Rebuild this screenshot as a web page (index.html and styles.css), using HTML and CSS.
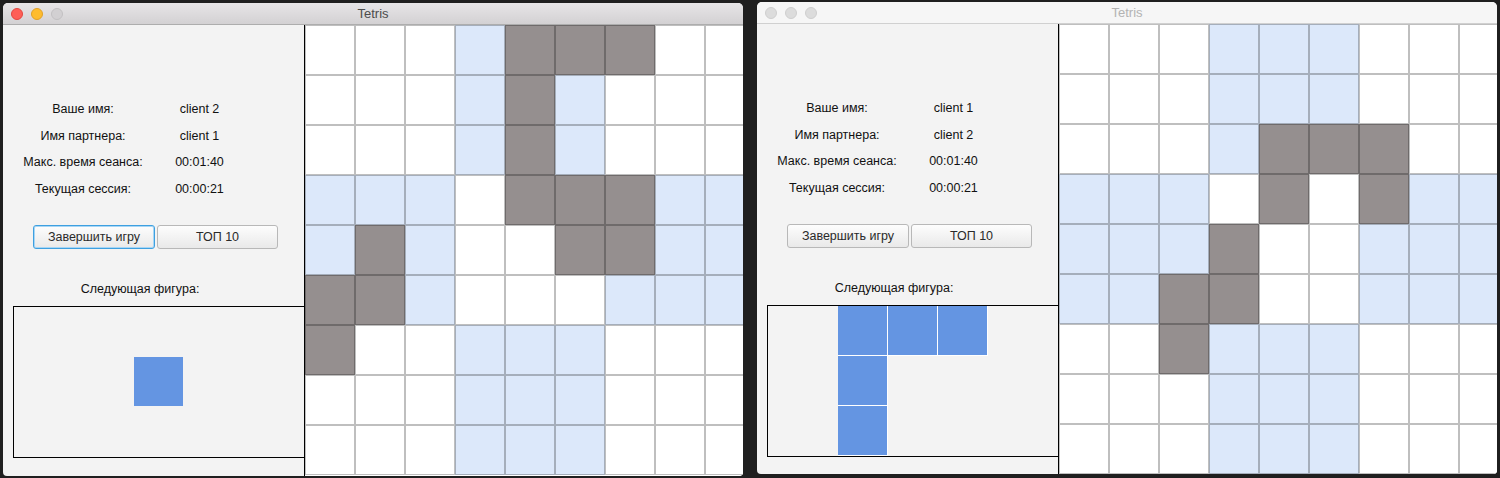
FILE: index.html
```html
<!DOCTYPE html>
<html lang="ru">
<head>
<meta charset="utf-8">
<title>Tetris</title>
<link rel="stylesheet" href="styles.css">
</head>
<body>
<div class="desktop">
  <div class="window active w1">
    <div class="titlebar">
      <div class="lights">
        <span class="light red"></span><span class="light yellow"></span><span class="light off"></span>
      </div>
      <div class="title">Tetris</div>
      <div></div>
    </div>
    <div class="content">
      <div class="panel">
        <div class="info">
          <div>Ваше имя:</div><div>client 2</div>
          <div>Имя партнера:</div><div>client 1</div>
          <div>Макс. время сеанса:</div><div>00:01:40</div>
          <div>Текущая сессия:</div><div>00:00:21</div>
        </div>
        <div class="buttons">
          <button class="btn focus">Завершить игру</button>
          <button class="btn">ТОП 10</button>
        </div>
        <div class="next-label">Следующая фигура:</div>
        <div class="preview">
          <div class="piece one">
            <div class="pc"></div>
          </div>
        </div>
      </div>
      <div class="board">
        <div class="c"></div><div class="c"></div><div class="c"></div><div class="c b"></div><div class="c g"></div><div class="c g"></div><div class="c g"></div><div class="c"></div><div class="c"></div>
        <div class="c"></div><div class="c"></div><div class="c"></div><div class="c b"></div><div class="c g"></div><div class="c b"></div><div class="c"></div><div class="c"></div><div class="c"></div>
        <div class="c"></div><div class="c"></div><div class="c"></div><div class="c b"></div><div class="c g"></div><div class="c b"></div><div class="c"></div><div class="c"></div><div class="c"></div>
        <div class="c b"></div><div class="c b"></div><div class="c b"></div><div class="c"></div><div class="c g"></div><div class="c g"></div><div class="c g"></div><div class="c b"></div><div class="c b"></div>
        <div class="c b"></div><div class="c g"></div><div class="c b"></div><div class="c"></div><div class="c"></div><div class="c g"></div><div class="c g"></div><div class="c b"></div><div class="c b"></div>
        <div class="c g"></div><div class="c g"></div><div class="c b"></div><div class="c"></div><div class="c"></div><div class="c"></div><div class="c b"></div><div class="c b"></div><div class="c b"></div>
        <div class="c g"></div><div class="c"></div><div class="c"></div><div class="c b"></div><div class="c b"></div><div class="c b"></div><div class="c"></div><div class="c"></div><div class="c"></div>
        <div class="c"></div><div class="c"></div><div class="c"></div><div class="c b"></div><div class="c b"></div><div class="c b"></div><div class="c"></div><div class="c"></div><div class="c"></div>
        <div class="c"></div><div class="c"></div><div class="c"></div><div class="c b"></div><div class="c b"></div><div class="c b"></div><div class="c"></div><div class="c"></div><div class="c"></div>
      </div>
    </div>
  </div>

  <div class="window inactive w2">
    <div class="titlebar">
      <div class="lights">
        <span class="light dim"></span><span class="light dim"></span><span class="light dim"></span>
      </div>
      <div class="title">Tetris</div>
      <div></div>
    </div>
    <div class="content">
      <div class="panel">
        <div class="info">
          <div>Ваше имя:</div><div>client 1</div>
          <div>Имя партнера:</div><div>client 2</div>
          <div>Макс. время сеанса:</div><div>00:01:40</div>
          <div>Текущая сессия:</div><div>00:00:21</div>
        </div>
        <div class="buttons">
          <button class="btn">Завершить игру</button>
          <button class="btn">ТОП 10</button>
        </div>
        <div class="next-label">Следующая фигура:</div>
        <div class="preview">
          <div class="piece ell">
            <div class="pc"></div><div class="pc"></div><div class="pc"></div>
            <div class="pc"></div><div class="empty"></div><div class="empty"></div>
            <div class="pc"></div><div class="empty"></div><div class="empty"></div>
          </div>
        </div>
      </div>
      <div class="board">
        <div class="c"></div><div class="c"></div><div class="c"></div><div class="c b"></div><div class="c b"></div><div class="c b"></div><div class="c"></div><div class="c"></div><div class="c"></div>
        <div class="c"></div><div class="c"></div><div class="c"></div><div class="c b"></div><div class="c b"></div><div class="c b"></div><div class="c"></div><div class="c"></div><div class="c"></div>
        <div class="c"></div><div class="c"></div><div class="c"></div><div class="c b"></div><div class="c g"></div><div class="c g"></div><div class="c g"></div><div class="c"></div><div class="c"></div>
        <div class="c b"></div><div class="c b"></div><div class="c b"></div><div class="c"></div><div class="c g"></div><div class="c"></div><div class="c g"></div><div class="c b"></div><div class="c b"></div>
        <div class="c b"></div><div class="c b"></div><div class="c b"></div><div class="c g"></div><div class="c"></div><div class="c"></div><div class="c b"></div><div class="c b"></div><div class="c b"></div>
        <div class="c b"></div><div class="c b"></div><div class="c g"></div><div class="c g"></div><div class="c"></div><div class="c"></div><div class="c b"></div><div class="c b"></div><div class="c b"></div>
        <div class="c"></div><div class="c"></div><div class="c g"></div><div class="c b"></div><div class="c b"></div><div class="c b"></div><div class="c"></div><div class="c"></div><div class="c"></div>
        <div class="c"></div><div class="c"></div><div class="c"></div><div class="c b"></div><div class="c b"></div><div class="c b"></div><div class="c"></div><div class="c"></div><div class="c"></div>
        <div class="c"></div><div class="c"></div><div class="c"></div><div class="c b"></div><div class="c b"></div><div class="c b"></div><div class="c"></div><div class="c"></div><div class="c"></div>
      </div>
    </div>
  </div>
</div>
</body>
</html>
```
FILE: styles.css
```css
* { box-sizing: border-box; }
html, body { margin: 0; padding: 0; }
body {
  background: #1f1f1f;
  width: 1500px;
  height: 478px;
  overflow: hidden;
  font-family: "Liberation Sans", Arial, sans-serif;
}
.desktop {
  display: flex;
  align-items: flex-start;
  gap: 14px;
  padding-left: 3px;
}
.window {
  width: 740px;
  border-radius: 5px 5px 4px 4px;
  overflow: hidden;
  background: #f3f3f3;
  display: flex;
  flex-direction: column;
}
.w1 { margin-top: 3px; height: 473px; }
.w2 { margin-top: 2px; height: 472px; }

.titlebar {
  height: 22px;
  flex: none;
  display: grid;
  grid-template-columns: 1fr auto 1fr;
  align-items: center;
  border-bottom: 1px solid #adadad;
}
.active .titlebar { background: linear-gradient(#e7e5e7, #d3d1d3); }
.inactive .titlebar { background: #f6f6f6; border-bottom-color: #d0d0d0; }
.lights { display: flex; gap: 8px; padding-left: 8px; }
.light {
  width: 12px; height: 12px; border-radius: 50%;
  display: block;
}
.red { background: #fe5f57; border: 1px solid #e2463f; }
.yellow { background: #febc2e; border: 1px solid #e0a028; }
.off { background: #d2d0d2; border: 1px solid #c2c0c2; }
.dim { background: #dcdcdc; border: 1px solid #cfcfcf; }
.title { font-size: 13px; color: #4c4c4c; }
.inactive .title { color: #b3b3b3; }

.content { display: flex; flex: 1; min-height: 0; }
.panel {
  width: 301px;
  flex: none;
  padding-top: 71px;
  font-size: 12.5px;
  color: #111;
}
.info {
  display: grid;
  grid-template-columns: 160px 73px;
  grid-auto-rows: 26.5px;
  align-items: center;
  text-align: center;
  white-space: nowrap;
}
.buttons {
  display: flex;
  gap: 2px;
  padding-left: 30px;
  margin-top: 23px;
}
.btn {
  height: 24px;
  width: 122px;
  font: inherit;
  font-size: 12.5px;
  color: #2a2a2a;
  border: 1px solid #b8b8b8;
  border-radius: 3px;
  background: linear-gradient(#fdfdfd, #e9e9e9);
  padding: 0;
}
.btn + .btn { width: 121px; }
.btn.focus { border-color: #3ea0e0; box-shadow: inset 0 0 0 1px #a8d6f5; }

.next-label {
  width: 274px;
  text-align: center;
  margin-top: 32px;
  line-height: 16px;
}
.preview {
  margin: 9px 0 0 10px;
  height: 152px;
  border: 1px solid #000;
  border-right: none;
  display: flex;
  align-items: center;
  justify-content: center;
}
.piece { display: grid; grid-template-columns: repeat(3, 50px); grid-auto-rows: 50px; }
.piece.one { grid-template-columns: 50px; }
.pc { background: #6495e2; border-right: 1px solid #fff; border-bottom: 1px solid #fff; }
.piece.one .pc { border-color: #f3f3f3; }

.board {
  flex: 1;
  overflow: hidden;
  border-left: 1px solid #000;
  background: #fff;
  display: grid;
  grid-template-columns: repeat(9, 50px);
  grid-auto-rows: 50px;
  align-content: start;
}
.c { background: #fff; border: 1px solid rgba(0, 0, 0, 0.25); }
.c.b { background: #dce8fa; }
.c.g { background: #958f8f; }
```
